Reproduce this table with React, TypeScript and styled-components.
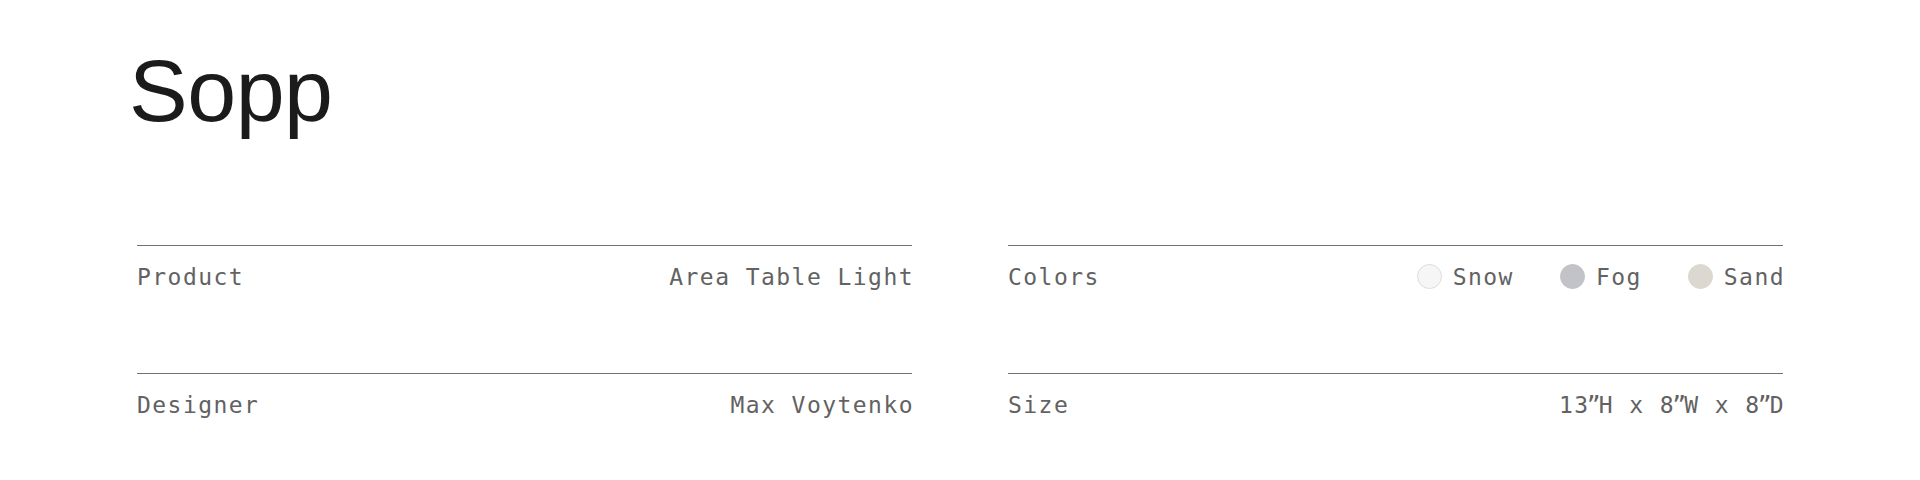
import React from "react";
import styled, { createGlobalStyle } from "styled-components";

const Global = createGlobalStyle`
  html, body { margin: 0; padding: 0; background: #ffffff; }
  body { font-family: "Liberation Sans", Arial, sans-serif; }
`;

const Page = styled.main`
  padding: 47px 137px 0;
  box-sizing: border-box;
  width: 1920px;
`;

const Title = styled.h1`
  margin: 0 0 0 -8px;
  font-family: "Liberation Sans", Arial, sans-serif;
  font-weight: 400;
  font-size: 88px;
  line-height: 88px;
  color: #1b1b1b;
  letter-spacing: -0.5px;
`;

const Specs = styled.section`
  margin-top: 110px;
  display: grid;
  grid-template-columns: 1fr 1fr;
  column-gap: 96px;
`;

const Row = styled.div`
  box-sizing: border-box;
  height: 128px;
  border-top: 1px solid #727272;
  padding-top: 20px;
  display: flex;
  justify-content: space-between;
  align-items: flex-start;
`;

const Mono = styled.span`
  font-family: "DejaVu Sans Mono", "Liberation Mono", monospace;
  font-size: 23px;
  line-height: 23px;
  letter-spacing: 1.45px;
  color: #626262;
  white-space: nowrap;
`;

const Value = styled(Mono)`
  margin-right: -2px;
`;

const Quote = styled.span`
  display: inline-block;
  margin: 0 -3.3px 0 -3px;
`;

const Swatches = styled.ul`
  list-style: none;
  margin: 0 -2px 0 0;
  padding: 0;
  display: flex;
  align-items: center;
  gap: 46px;
`;

const Swatch = styled.li`
  display: flex;
  align-items: center;
  gap: 11px;
`;

const Dot = styled.span<{ $fill: string; $border: string }>`
  width: 25px;
  height: 25px;
  border-radius: 50%;
  box-sizing: border-box;
  background: ${(p) => p.$fill};
  border: 1px solid ${(p) => p.$border};
  margin-top: -2px;
`;

const colors = [
  { name: "Snow", fill: "#f6f6f6", border: "#dcdcdc" },
  { name: "Fog", fill: "#c1c3c9", border: "#c1c3c9" },
  { name: "Sand", fill: "#ddd8cf", border: "#ddd8cf" },
];

export default function App() {
  return (
    <>
      <Global />
      <Page>
        <Title>Sopp</Title>
        <Specs>
          <Row>
            <Mono>Product</Mono>
            <Value>Area Table Light</Value>
          </Row>
          <Row>
            <Mono>Colors</Mono>
            <Swatches>
              {colors.map((c) => (
                <Swatch key={c.name}>
                  <Dot $fill={c.fill} $border={c.border} />
                  <Mono>{c.name}</Mono>
                </Swatch>
              ))}
            </Swatches>
          </Row>
          <Row>
            <Mono>Designer</Mono>
            <Value>Max Voytenko</Value>
          </Row>
          <Row>
            <Mono>Size</Mono>
            <Value>
              13<Quote>”</Quote>H x 8<Quote>”</Quote>W x 8<Quote>”</Quote>D
            </Value>
          </Row>
        </Specs>
      </Page>
    </>
  );
}
